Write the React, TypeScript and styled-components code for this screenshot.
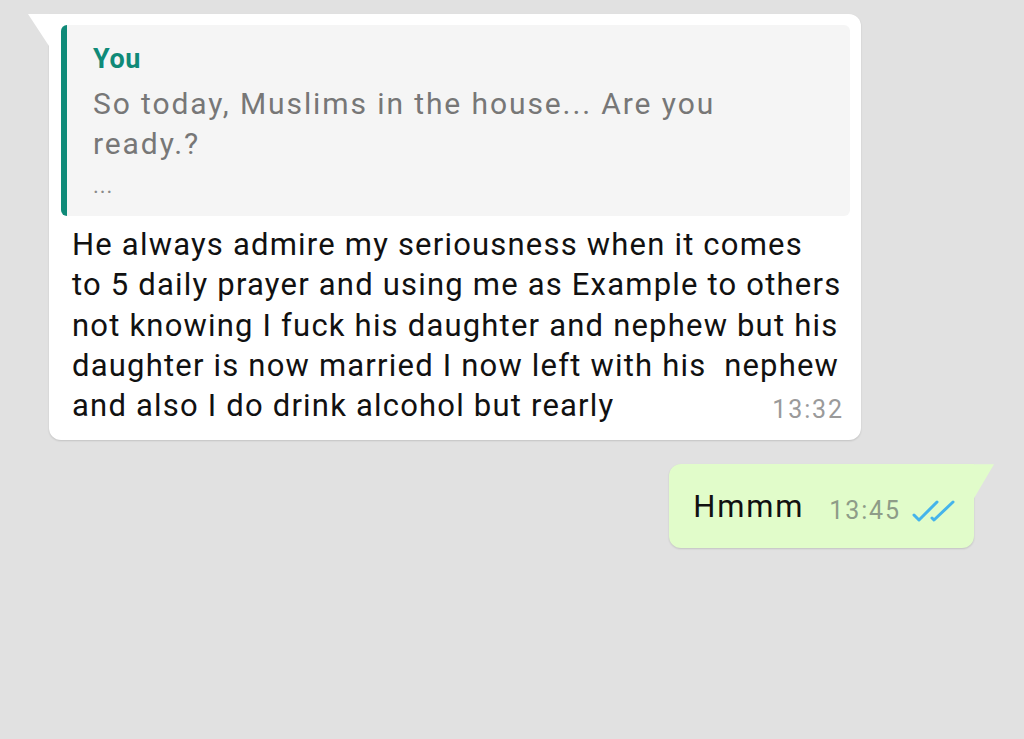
import styled, { createGlobalStyle } from 'styled-components'

const Global = createGlobalStyle`
  html, body {
    margin: 0;
    padding: 0;
    background: #e1e1e1;
  }
  body {
    font-family: Roboto, "Noto Sans", "Liberation Sans", sans-serif;
    width: 1024px;
    height: 739px;
    overflow: hidden;
  }
`

const Chat = styled.div`
  display: flex;
  flex-direction: column;
  padding: 14px 50px 0 49px;
  gap: 24px;
`

interface IRow {
  out?: boolean
}

const Row = styled.div<IRow>`
  display: flex;
  justify-content: ${props => (props.out ? 'flex-end' : 'flex-start')};
`

const Bubble = styled.div<IRow>`
  position: relative;
  background: ${props => (props.out ? '#e1fcca' : '#ffffff')};
  border-radius: ${props => (props.out ? '12px 0 12px 12px' : '0 12px 12px 12px')};
  box-shadow: 0 1px 2px rgba(0, 0, 0, 0.14);
  padding: ${props => (props.out ? '0 19px 0 24px' : '11px 11px 14px 12px')};
  height: ${props => (props.out ? '84px' : 'auto')};
  box-sizing: border-box;

  &::before {
    content: '';
    position: absolute;
    top: 0;
    ${props => (props.out ? 'right: -20px;' : 'left: -21px;')}
    width: ${props => (props.out ? '20px' : '21px')};
    height: ${props => (props.out ? '34px' : '32px')};
    background: ${props => (props.out ? '#e1fcca' : '#ffffff')};
    clip-path: ${props =>
      props.out
        ? 'polygon(0 0, 100% 0, 0 100%)'
        : 'polygon(0 0, 100% 0, 100% 100%)'};
  }
`

const Quote = styled.div`
  width: 789px;
  background: #f5f5f5;
  border-radius: 6px;
  border-left: 6px solid #0f8a78;
  box-sizing: border-box;
  padding: 19px 20px 20px 26px;
`

const QuoteName = styled.div`
  color: #0f8a78;
  font-weight: 700;
  font-size: 27px;
  line-height: 30px;
  letter-spacing: 0.6px;
`

const QuoteText = styled.div`
  color: #777777;
  font-size: 30px;
  line-height: 40px;
  letter-spacing: 1.9px;
  margin-top: 10px;
`

const Ellipsis = styled.div`
  color: #8a8a8a;
  font-size: 22px;
  line-height: 20px;
  letter-spacing: 1px;
  margin-top: 12px;
`

const Body = styled.div`
  padding: 9px 0 0 11px;
  color: #111;
  font-size: 31px;
  line-height: 40.25px;
  letter-spacing: 1.2px;
  white-space: pre;
`

const LastLine = styled.div`
  display: flex;
  justify-content: space-between;
  align-items: flex-end;
`

const Time = styled.span<IRow>`
  color: ${props => (props.out ? '#8e9c88' : '#9a9a9a')};
  font-size: 25px;
  line-height: 24px;
  letter-spacing: 1.9px;
  margin-bottom: ${props => (props.out ? '0' : '4px')};
  margin-right: ${props => (props.out ? '0' : '6px')};
`

const OutLine = styled.div`
  display: flex;
  align-items: flex-start;
  gap: 25px;
  padding-top: 25px;
`

const OutText = styled.span`
  color: #111;
  font-size: 31px;
  line-height: 36px;
  letter-spacing: 1.8px;
`

const Meta = styled.div`
  display: flex;
  align-items: center;
  gap: 10px;
  padding-top: 10px;
`

function DoubleTick() {
  return (
    <svg width="44" height="24" viewBox="0 0 44 24" fill="none">
      <path d="M3 16 L8 21 L26 3" stroke="#45b4eb" strokeWidth="3" strokeLinecap="round" strokeLinejoin="round" />
      <path d="M21 19 L23 21 L42 3" stroke="#45b4eb" strokeWidth="3" strokeLinecap="round" strokeLinejoin="round" />
    </svg>
  )
}

export default function App() {
  return (
    <>
      <Global />
      <Chat>
        <Row>
          <Bubble>
            <Quote>
              <QuoteName>You</QuoteName>
              <QuoteText>
                So today, Muslims in the house... Are you
                <br />
                ready.?
              </QuoteText>
              <Ellipsis>...</Ellipsis>
            </Quote>
            <Body>
              <div>He always admire my seriousness when it comes</div>
              <div>to 5 daily prayer and using me as Example to others</div>
              <div>not knowing I fuck his daughter and nephew but his</div>
              <div>daughter is now married I now left with his  nephew</div>
              <LastLine>
                <span>and also I do drink alcohol but rearly</span>
                <Time>13:32</Time>
              </LastLine>
            </Body>
          </Bubble>
        </Row>
        <Row out>
          <Bubble out>
            <OutLine>
              <OutText>Hmmm</OutText>
              <Meta>
                <Time out>13:45</Time>
                <DoubleTick />
              </Meta>
            </OutLine>
          </Bubble>
        </Row>
      </Chat>
    </>
  )
}
